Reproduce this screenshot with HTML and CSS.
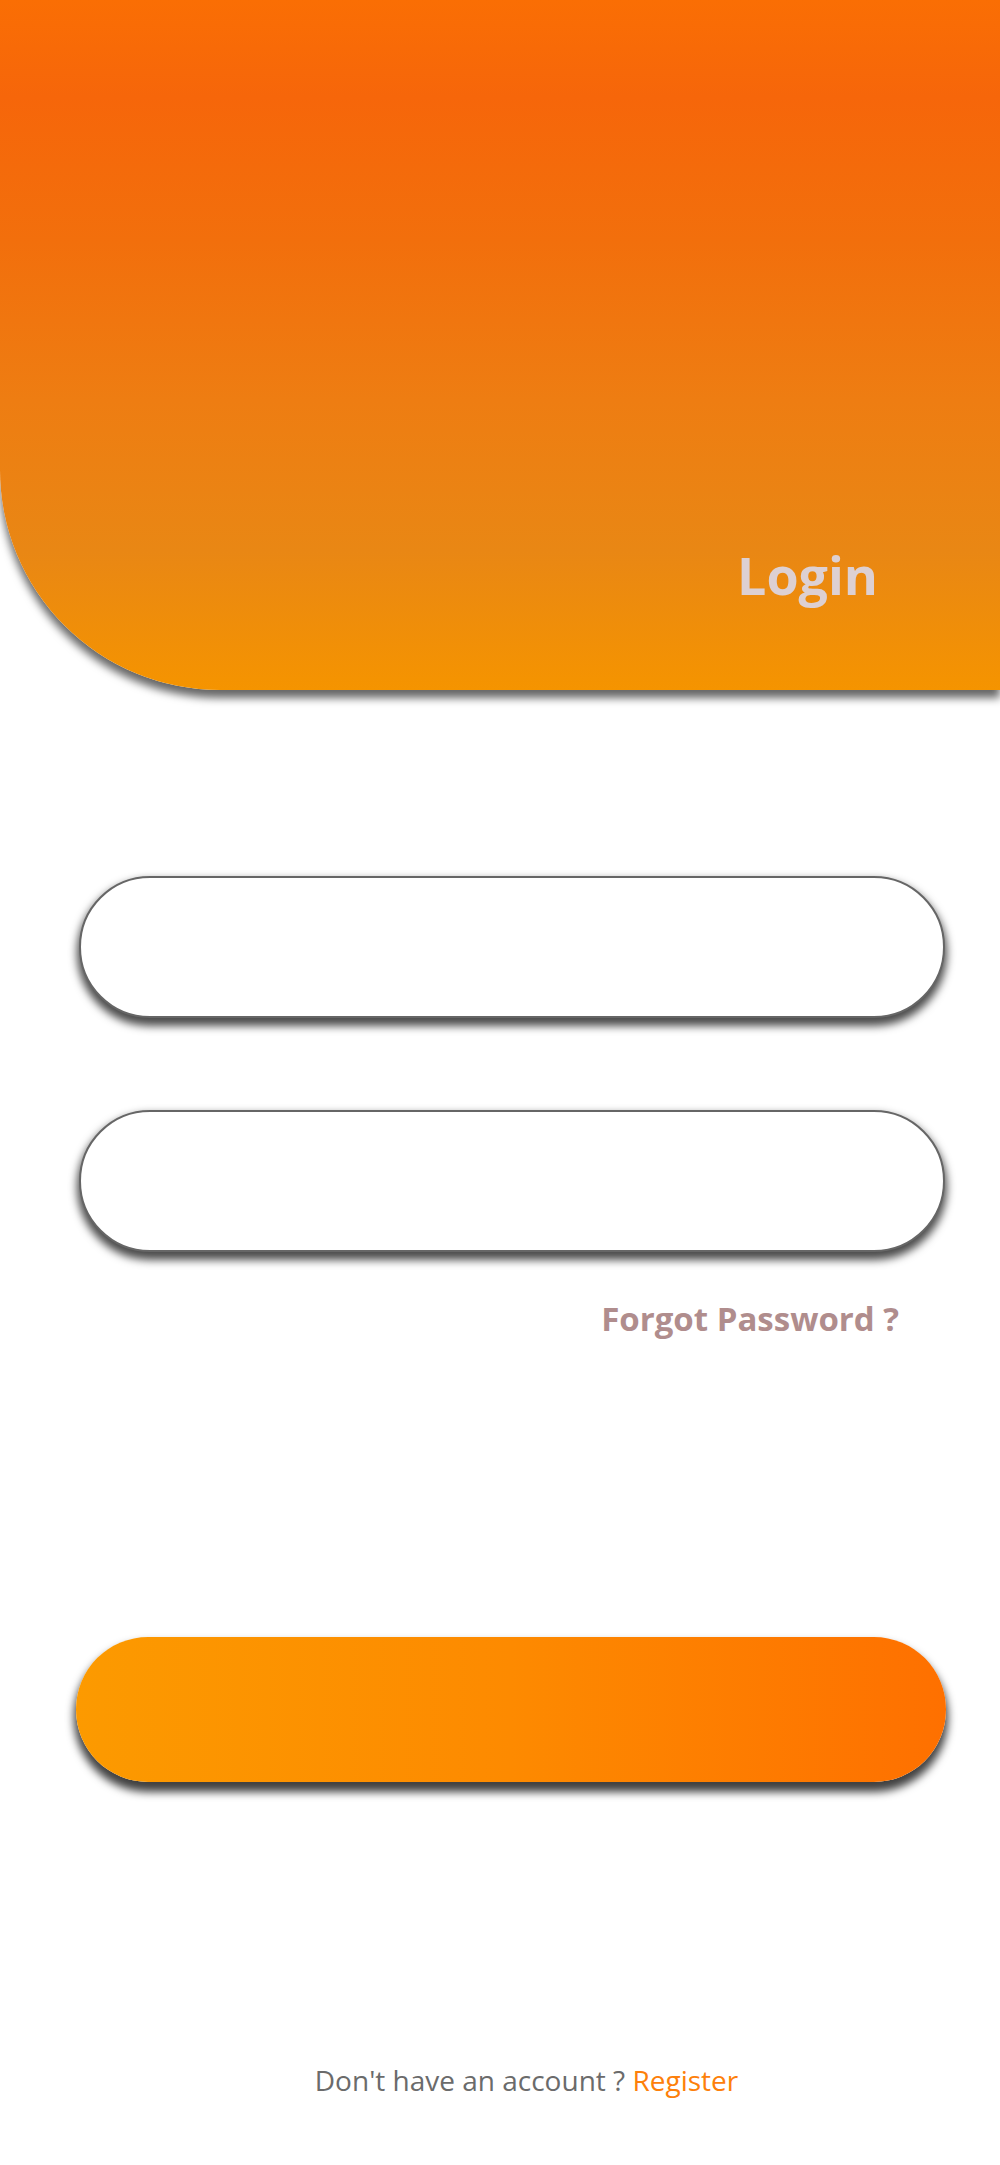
FILE: index.html
```html
<!DOCTYPE html>
<html>
<head>
<meta charset="utf-8">
<link rel="stylesheet" href="styles.css">
</head>
<body>
<div class="page">
  <header class="header">
    <h1 class="title">Login</h1>
  </header>
  <form class="form">
    <input class="field field-first" type="text">
    <input class="field field-second" type="password">
    <div class="forgot">Forgot Password ?</div>
    <button class="submit" type="button"></button>
  </form>
  <p class="footer">Don't have an account ? <span class="register">Register</span></p>
</div>
</body>
</html>
```
FILE: styles.css
```css
html, body {
  margin: 0;
  padding: 0;
  background: #ffffff;
}
.page {
  width: 1000px;
  min-height: 2165px;
  display: flex;
  flex-direction: column;
  font-family: "Open Sans", "Noto Sans", sans-serif;
}
.header {
  height: 690px;
  box-sizing: border-box;
  border-bottom-left-radius: 220px;
  background: linear-gradient(180deg, #fa6e04 0%, #f6660a 14%, #f26f0c 35%, #ee7d12 58%, #e98714 80%, #f59400 100%);
  box-shadow: 0 8px 8px rgba(0, 0, 0, 0.6);
  display: flex;
  justify-content: flex-end;
  align-items: flex-end;
  padding: 0 122px 80px 0;
  position: relative;
  z-index: 1;
}
.title {
  margin: 0;
  font-size: 52px;
  line-height: 70px;
  font-weight: 700;
  color: #ddd0d2;
}
.form {
  display: flex;
  flex-direction: column;
  padding: 0 55px 0 79px;
  margin: 0;
}
.field {
  box-sizing: border-box;
  width: 866px;
  height: 142px;
  border: 2px solid #666666;
  border-radius: 71px;
  background: #ffffff;
  box-shadow: 0 6px 8px 2px rgba(0, 0, 0, 0.7);
  outline: none;
  padding: 0 40px;
  font-size: 30px;
}
.field-first {
  margin-top: 186px;
}
.field-second {
  margin-top: 92px;
}
.forgot {
  margin-top: 45px;
  margin-right: 46px;
  align-self: flex-end;
  font-size: 33px;
  line-height: 44px;
  font-weight: 700;
  color: #b08d8d;
}
.submit {
  margin-top: 296px;
  margin-left: -3px;
  width: 870px;
  height: 145px;
  border: none;
  border-radius: 72px;
  background: linear-gradient(90deg, #fc9a00 0%, #fd8a00 50%, #fe7000 100%);
  box-shadow: 0 8px 8px 2px rgba(0, 0, 0, 0.75);
  cursor: pointer;
}
.footer {
  margin: 278px 0 0 0;
  padding-left: 53px;
  text-align: center;
  font-size: 28px;
  line-height: 40px;
  color: #6b6b6b;
}
.register {
  color: #fd800a;
}
```
